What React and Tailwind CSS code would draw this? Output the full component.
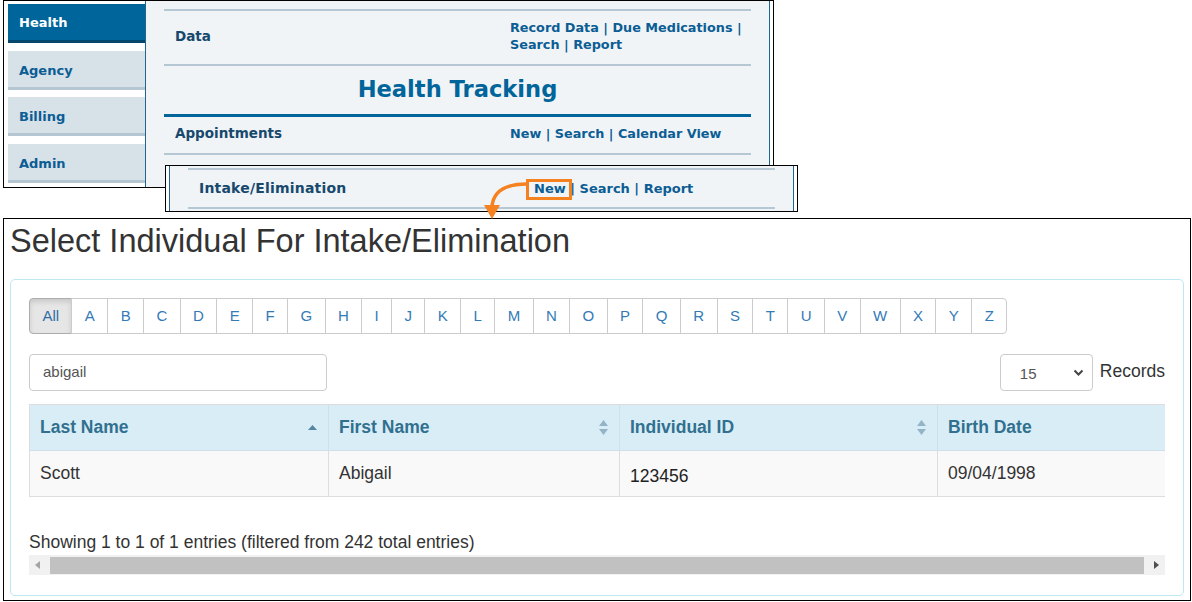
import React from 'react';

const letters = 'ABCDEFGHIJKLMNOPQRSTUVWXYZ'.split('');

const navTabs = ['Health', 'Agency', 'Billing', 'Admin'];

function LinkList({ items }) {
  return (
    <span>
      {items.map((item, i) => (
        <span key={i}>
          {i > 0 && <span> | </span>}
          {item}
        </span>
      ))}
    </span>
  );
}

function NavRow({ label, children, className, labelClass = 'text-[13.5px]' }) {
  return (
    <div className={`flex items-center px-[11px] ${className}`}>
      <div className={`w-[335px] shrink-0 text-[#17496d] ${labelClass}`}>{label}</div>
      <div className="text-[#0b5d94] text-[12.8px] leading-[17px] whitespace-nowrap">{children}</div>
    </div>
  );
}

function SortIcon({ both }) {
  if (both)
    return (
      <svg width="11" height="17" viewBox="0 0 11 17">
        <path d="M5.5 1 L10 7 L1 7 Z" fill="#93b4c7" />
        <path d="M5.5 16 L10 10 L1 10 Z" fill="#93b4c7" />
      </svg>
    );
  return (
    <svg width="11" height="7" viewBox="0 0 11 7">
      <path d="M5.5 1 L10 6 L1 6 Z" fill="#55869f" />
    </svg>
  );
}

function HeadCell({ label, sort, width }) {
  return (
    <th
      className="h-[46px] px-[10px] text-left font-bold text-[#31708f] border-r border-b border-[#cfe0ea] bg-[#d9edf7]"
      style={{ width }}
    >
      <div className="flex items-center justify-between">
        <span>{label}</span>
        {sort && <span className="flex">{sort === 'asc' ? <SortIcon /> : <SortIcon both />}</span>}
      </div>
    </th>
  );
}

export default function App() {
  return (
    <div className="w-[1192px] h-[602px] bg-white overflow-hidden">
      <div className="relative h-[218px] font-['DejaVu_Sans',sans-serif] text-[13px] font-bold">
        {/* main menu crop */}
        <div className="absolute left-[3px] top-0 w-[771px] h-[188px] border border-black bg-white flex">
          <div className="w-[141px] shrink-0 pl-[4px] pt-[3px] flex flex-col gap-[7.5px]">
            {navTabs.map((t, i) => (
              <div
                key={t}
                className={
                  i === 0
                    ? 'h-[39px] pl-[11px] pt-[9px] bg-[#00659a] text-white border-b-[3px] border-[#06486d]'
                    : 'h-[39px] pl-[11px] pt-[10px] bg-[#d6e1e8] text-[#0b5d94] border-b-[3px] border-[#b4c6d1]'
                }
              >
                {t}
              </div>
            ))}
          </div>
          <div className="flex-1 min-w-0 mr-[3px] bg-[#f0f4f7] border-l border-r border-[#1f6590] px-[18px] pt-[8px]">
            <NavRow label="Data" className="h-[55px] pb-[3px] border-t-2 border-[#b5c7d2]">
              <LinkList items={['Record Data', 'Due Medications']} /> |
              <br />
              <LinkList items={['Search', 'Report']} />
            </NavRow>
            <div className="h-[50px] pb-[1px] border-t-2 border-[#b5c7d2] flex items-center justify-center text-[22.6px] text-[#00659a]">
              Health Tracking
            </div>
            <NavRow label="Appointments" className="h-[39px] pb-[3px] border-t-[3px] border-[#00659a]">
              <LinkList items={['New', 'Search', 'Calendar View']} />
            </NavRow>
            <div className="border-t-2 border-[#b5c7d2]"></div>
          </div>
        </div>

        {/* intake row crop */}
        <div className="absolute left-[165px] top-[165px] w-[633px] h-[47px] border border-black bg-white px-[3px]">
          <div className="h-full bg-[#f0f4f7] border-l border-r border-[#1f6590] px-[18px] pt-[2px]">
            <NavRow
              label="Intake/Elimination"
              labelClass="text-[14px] tracking-[0.2px]"
              className="h-[41px] border-t-2 border-b-2 border-[#b5c7d2]"
            >
              <span className="relative text-[13px]">
                New
                <span className="absolute -left-[8px] -right-[6px] -top-[2px] -bottom-[4px] border-[3px] border-[#f5821f]"></span>
              </span>
              <span className="text-[13px]"> | Search | Report</span>
            </NavRow>
          </div>
        </div>

        {/* arrow */}
        <svg className="absolute left-[480px] top-[176px] z-10" width="50" height="46" viewBox="0 0 50 46">
          <path d="M47 8 C26 8 13 15 12 31" fill="none" stroke="#f5821f" strokeWidth="3.5" strokeLinecap="round" />
          <path d="M4 29 L20 29 L12 43 Z" fill="#f5821f" />
        </svg>
      </div>

      {/* select individual page */}
      <div className="ml-[3px] w-[1188px] h-[383px] border border-black px-[6px] pt-[5px] font-['Liberation_Sans',Arial,sans-serif] text-[#333]">
        <h1 className="text-[32.5px] leading-[35px]">Select Individual For Intake/Elimination</h1>
        <div className="mt-[20px] h-[317px] border border-[#bce8f1] rounded-[5px] p-[18px]">
          <div className="flex h-[36px] text-[15px] text-[#337ab7]">
            <div className="px-[12.4px] flex items-center bg-[#e6e6e6] border border-[#adadad] rounded-l-[4px] shadow-[inset_0_3px_5px_rgba(0,0,0,0.125)] text-[#2f6ea5]">
              All
            </div>
            {letters.map((l, i) => (
              <div
                key={l}
                className={`-ml-px px-[12.4px] flex items-center border border-[#ccc] bg-white ${
                  i === letters.length - 1 ? 'rounded-r-[4px]' : ''
                }`}
              >
                {l}
              </div>
            ))}
          </div>

          <div className="mt-[20px] flex items-center justify-between">
            <div className="w-[298px] h-[37px] border border-[#ccc] rounded-[4px] pl-[13px] flex items-center text-[15px] text-[#555]">
              abigail
            </div>
            <div className="flex items-center">
              <div className="w-[93px] h-[37px] border border-[#ccc] rounded-[4px] pl-[19px] pr-[8px] flex items-center justify-between text-[15px] text-[#555]">
                <span className="pt-[3px]">15</span>
                <svg width="11" height="8" viewBox="0 0 11 8">
                  <path d="M1.5 1.5 L5.5 5.5 L9.5 1.5" fill="none" stroke="#444" strokeWidth="2" />
                </svg>
              </div>
              <span className="ml-[7px] text-[17.5px] leading-[25px] -mt-[2px]">Records</span>
            </div>
          </div>

          <div className="mt-[13px] overflow-hidden">
            <table className="table-fixed w-[1400px] border-collapse text-[17.5px] border-l border-t border-[#dddddd]">
              <thead>
                <tr>
                  <HeadCell label="Last Name" sort="asc" width={299} />
                  <HeadCell label="First Name" sort="both" width={291} />
                  <HeadCell label="Individual ID" sort="both" width={318} />
                  <HeadCell label="Birth Date" width={492} />
                </tr>
              </thead>
              <tbody>
                <tr className="bg-[#f9f9f9]">
                  <td className="h-[46px] px-[10px] border-r border-b border-[#dddddd]">Scott</td>
                  <td className="h-[46px] px-[10px] border-r border-b border-[#dddddd]">Abigail</td>
                  <td className="h-[46px] px-[10px] pt-[5px] border-r border-b border-[#dddddd] text-[#222]">123456</td>
                  <td className="h-[46px] px-[10px] border-r border-b border-[#dddddd]">09/04/1998</td>
                </tr>
              </tbody>
            </table>
          </div>

          <div className="mt-[33px] text-[17.5px] leading-[25px]">
            Showing 1 to 1 of 1 entries (filtered from 242 total entries)
          </div>

          <div className="h-[20px] bg-[#f1f1f1] flex items-center">
            <div className="w-[17px] flex justify-center">
              <svg width="5" height="8" viewBox="0 0 5 8">
                <path d="M5 0 L0 4 L5 8 Z" fill="#a3a3a3" />
              </svg>
            </div>
            <div className="flex-1 mx-[4px] h-[17px] bg-[#c1c1c1]"></div>
            <div className="w-[17px] flex justify-center">
              <svg width="5" height="8" viewBox="0 0 5 8">
                <path d="M0 0 L5 4 L0 8 Z" fill="#505050" />
              </svg>
            </div>
          </div>
        </div>
      </div>
    </div>
  );
}
